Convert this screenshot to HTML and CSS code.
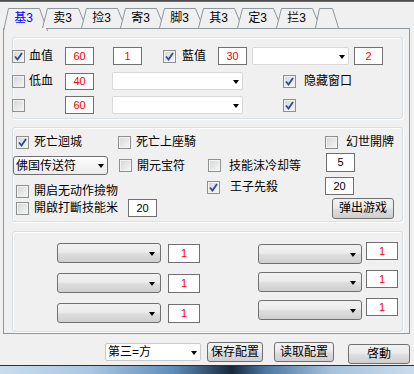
FILE: index.html
```html
<!DOCTYPE html>
<html lang="zh">
<head>
    <meta charset="UTF-8">
    <title>基3</title>
    <link rel="stylesheet" href="styles.css">
</head>
<body>
    <div class="titleline"></div>

    <div class="tabs">
        <div class="tab active">
            <svg class="tab-shape" width="46" height="23"><polyline points="0.5,23 5.5,0.5 36.5,0.5 44.5,23"/></svg>
            <span class="tab-label">基3</span>
        </div>
        <div class="tab">
            <svg class="tab-shape" width="46" height="20"><polyline points="0.5,20 5.5,0.5 36.5,0.5 44.5,20"/></svg>
            <span class="tab-label">卖3</span>
        </div>
        <div class="tab">
            <svg class="tab-shape" width="46" height="20"><polyline points="0.5,20 5.5,0.5 36.5,0.5 44.5,20"/></svg>
            <span class="tab-label">捡3</span>
        </div>
        <div class="tab">
            <svg class="tab-shape" width="46" height="20"><polyline points="0.5,20 5.5,0.5 36.5,0.5 44.5,20"/></svg>
            <span class="tab-label">寄3</span>
        </div>
        <div class="tab">
            <svg class="tab-shape" width="46" height="20"><polyline points="0.5,20 5.5,0.5 36.5,0.5 44.5,20"/></svg>
            <span class="tab-label">脚3</span>
        </div>
        <div class="tab">
            <svg class="tab-shape" width="46" height="20"><polyline points="0.5,20 5.5,0.5 36.5,0.5 44.5,20"/></svg>
            <span class="tab-label">其3</span>
        </div>
        <div class="tab">
            <svg class="tab-shape" width="46" height="20"><polyline points="0.5,20 5.5,0.5 36.5,0.5 44.5,20"/></svg>
            <span class="tab-label">定3</span>
        </div>
        <div class="tab">
            <svg class="tab-shape" width="46" height="20"><polyline points="0.5,20 5.5,0.5 36.5,0.5 44.5,20"/></svg>
            <span class="tab-label">拦3</span>
        </div>
        <div class="tab tab-empty">
            <svg class="tab-shape" width="25" height="20"><polyline points="0.5,20 4.5,0.5 17.5,0.5 23.5,20"/></svg>
        </div>
    </div>

    <div class="panel">
        <!-- hp / mp -->
        <div class="group g1">
            <div class="row h24">
                <label class="chk w53 gap4"><span class="cb on"><svg width="11" height="11"><path d="M2 5.5 L4.5 8.5 L9 2"/></svg></span><span>血值</span></label>
                <div class="num red">60</div>
                <div class="num red ml19">1</div>
                <label class="chk w55 gap6 ml21"><span class="cb on"><svg width="11" height="11"><path d="M2 5.5 L4.5 8.5 L9 2"/></svg></span><span>藍值</span></label>
                <div class="num red">30</div>
                <div class="combo w97 ml5"><span class="arrow"></span></div>
                <div class="num red ml5">2</div>
            </div>
            <div class="row h26">
                <label class="chk w53 gap4"><span class="cb"></span><span>低血</span></label>
                <div class="num red h17">40</div>
                <div class="combo w131 h20 ml18"><span class="arrow"></span></div>
                <label class="chk gap8 ml40"><span class="cb on"><svg width="11" height="11"><path d="M2 5.5 L4.5 8.5 L9 2"/></svg></span><span>隐藏窗口</span></label>
            </div>
            <div class="row h22">
                <label class="chk w53"><span class="cb"></span></label>
                <div class="num red">60</div>
                <div class="combo w131 h20 ml18"><span class="arrow"></span></div>
                <label class="chk ml40"><span class="cb on"><svg width="11" height="11"><path d="M2 5.5 L4.5 8.5 L9 2"/></svg></span></label>
            </div>
        </div>

        <!-- options -->
        <div class="group g2">
            <div class="row h24 pl3">
                <label class="chk w102"><span class="cb on"><svg width="11" height="11"><path d="M2 5.5 L4.5 8.5 L9 2"/></svg></span><span>死亡迴城</span></label>
                <label class="chk w207"><span class="cb"></span><span>死亡上座騎</span></label>
                <label class="chk gap8"><span class="cb"></span><span>幻世開牌</span></label>
            </div>
            <div class="row h23">
                <div class="dd dd-light w95"><span class="dd-text">佛国传送符</span><span class="arrow"></span></div>
                <label class="chk w89 ml11"><span class="cb"></span><span>開元宝符</span></label>
                <label class="chk w118 gap8"><span class="cb"></span><span>技能沫冷却等</span></label>
                <div class="num h19 up">5</div>
            </div>
            <div class="row h20 pl3">
                <label class="chk w191 down"><span class="cb"></span><span>開启无动作撿物</span></label>
                <label class="chk w118 gap10"><span class="cb on"><svg width="11" height="11"><path d="M2 5.5 L4.5 8.5 L9 2"/></svg></span><span>王子先殺</span></label>
                <div class="num up-small">20</div>
            </div>
            <div class="row h22 pl3">
                <label class="chk w112"><span class="cb"></span><span>開啟打斷技能米</span></label>
                <div class="num">20</div>
                <div class="btn w62 h21 ml175">弹出游戏</div>
            </div>
        </div>

        <!-- skill slots -->
        <div class="group g3">
            <div class="slots slots-left">
                <div class="slot"><div class="dd w104"><span class="arrow"></span></div><div class="num red w32 h19">1</div></div>
                <div class="slot"><div class="dd w104"><span class="arrow"></span></div><div class="num red w32 h19">1</div></div>
                <div class="slot"><div class="dd w104"><span class="arrow"></span></div><div class="num red w32 h19">1</div></div>
            </div>
            <div class="slots slots-right">
                <div class="slot"><div class="dd w104"><span class="arrow"></span></div><div class="num red w32 h20">1</div></div>
                <div class="slot"><div class="dd w104"><span class="arrow"></span></div><div class="num red w32 h20">1</div></div>
                <div class="slot"><div class="dd w104"><span class="arrow"></span></div><div class="num red w32 h20">1</div></div>
            </div>
        </div>
    </div>

    <div class="footer">
        <div class="combo combo-text w96 h20 mt1"><span class="dd-text">第三=方</span><span class="arrow"></span></div>
        <div class="btn w56 ml6">保存配置</div>
        <div class="btn w60 ml11">读取配置</div>
        <div class="btn w62 ml14 mt2">啓動</div>
    </div>

    <div class="taskbar"></div>
</body>
</html>
```

FILE: styles.css
```css
* {
    box-sizing: border-box;
}

body {
    margin: 0;
    width: 414px;
    height: 374px;
    overflow: hidden;
    background: #f0f0f0;
    font-family: "Liberation Sans", "Noto Sans CJK SC", sans-serif;
    font-size: 12px;
    line-height: 14px;
    color: #000;
}

.titleline {
    height: 2px;
    background: linear-gradient(#3c3c3c, #7c7c7c);
}

/* tabs */
.tabs {
    display: flex;
    height: 26px;
    padding-left: 3px;
}

.tab {
    position: relative;
    flex: none;
    width: 39px;
    height: 26px;
}

.tab-shape {
    position: absolute;
    left: 0;
    bottom: 0;
    overflow: visible;
}

.tab-shape polyline {
    fill: #f0f0f0;
    stroke: #8c979e;
    stroke-width: 1;
}

.tab.active .tab-shape {
    bottom: -3px;
}

.tab-label {
    position: relative;
    display: block;
    width: 31px;
    margin-left: 5px;
    padding-top: 9px;
    text-align: center;
}

.tab.active .tab-label {
    color: #0000ff;
}

/* panel */
.panel {
    margin-left: 3px;
    width: 407px;
    height: 306px;
    border: 1px solid #8c979e;
    padding: 8px 6px 1px 8px;
}

.group {
    border: 1px solid #d5dfe5;
    border-radius: 3px;
    box-shadow: inset 1px 1px 0 #fff, 1px 1px 0 #fff;
}

.g1 {
    height: 82px;
    padding-top: 6px;
}

.g1 .row {
    margin-left: -1px;
}

.g2 {
    height: 95px;
    margin-top: 8px;
    padding-top: 2px;
}

.g3 {
    display: flex;
    height: 101px;
    margin-top: 9px;
    padding-top: 11px;
}

.row {
    display: flex;
    align-items: center;
}

.h20 { height: 20px; }
.h22 { height: 22px; }
.h23 { height: 23px; }
.h24 { height: 24px; }
.h26 { height: 26px; }
.pl3 { padding-left: 3px; }

/* checkbox */
.chk {
    display: flex;
    flex: none;
    align-items: center;
    gap: 5px;
    white-space: nowrap;
}

.gap4 { gap: 4px; }
.gap6 { gap: 6px; }
.gap8 { gap: 8px; }
.gap10 { gap: 10px; }

.cb {
    display: block;
    flex: none;
    width: 13px;
    height: 13px;
    border: 1px solid #8e8f8f;
    background: linear-gradient(135deg, #d3d5d8, #f7f7f7);
    box-shadow: inset 0 0 0 1px #f2f2f2;
}

.cb svg {
    display: block;
}

.cb path {
    fill: none;
    stroke: #2e4b8f;
    stroke-width: 1.8;
}

.down {
    margin-top: 8px;
}

/* edits */
.num {
    display: flex;
    flex: none;
    align-items: center;
    justify-content: center;
    width: 29px;
    height: 18px;
    border: 1px solid #707070;
    background: #fff;
    font-size: 11px;
}

.red { color: #ff0000; }
.w32 { width: 32px; }
.h17 { height: 17px; }
.h19 { height: 19px; }
.up { margin-bottom: 7px; }
.up-small { margin-bottom: 3px; }

/* combos */
.combo {
    display: flex;
    flex: none;
    align-items: center;
    justify-content: flex-end;
    height: 18px;
    padding-right: 3px;
    border: 1px solid #d9d9d9;
    border-radius: 2px;
    background: #fff;
}

.combo-text {
    justify-content: space-between;
    padding-left: 2px;
    border-color: #c9c9c9;
}

.dd {
    display: flex;
    flex: none;
    align-items: center;
    justify-content: flex-end;
    height: 20px;
    padding-right: 5px;
    border: 1px solid #707070;
    border-radius: 3px;
    background: linear-gradient(#f2f2f2, #ebebeb 45%, #dddddd 55%, #cfcfcf);
}

.dd-light {
    justify-content: space-between;
    height: 19px;
    padding: 0 3px 0 2px;
    background: linear-gradient(#fdfdfd, #f4f4f4 50%, #ececec);
}

.dd-text {
    white-space: nowrap;
}

.arrow {
    display: block;
    width: 1px;
    height: 0;
    margin-top: 1px;
    border-left: 3px solid transparent;
    border-right: 3px solid transparent;
    border-top: 4px solid #000;
}

.slots {
    display: flex;
    flex-direction: column;
}

.slots-left {
    margin-left: 44px;
    gap: 10px;
}

.slots-left .slot {
    display: flex;
    align-items: center;
    gap: 7px;
    height: 20px;
}

.slots-right {
    margin-left: 58px;
    margin-top: -1px;
    gap: 6px;
}

.slots-right .slot {
    display: flex;
    align-items: flex-start;
    gap: 4px;
    height: 22px;
}

.slots-right .dd {
    margin-top: 2px;
}

/* buttons */
.btn {
    display: flex;
    flex: none;
    align-items: center;
    justify-content: center;
    height: 20px;
    border: 1px solid #707070;
    border-radius: 3px;
    background: linear-gradient(#f2f2f2, #ebebeb 45%, #dddddd 55%, #cfcfcf);
    white-space: nowrap;
}

.h21 { height: 21px; }

/* widths / margins */
.w53 { width: 53px; }
.w55 { width: 55px; }
.w56 { width: 56px; }
.w60 { width: 60px; }
.w62 { width: 62px; }
.w89 { width: 89px; }
.w95 { width: 95px; }
.w96 { width: 96px; }
.w97 { width: 97px; }
.w102 { width: 102px; }
.w104 { width: 104px; }
.w112 { width: 112px; }
.w118 { width: 118px; }
.w131 { width: 131px; }
.w191 { width: 191px; }
.w207 { width: 207px; }

.ml5 { margin-left: 5px; }
.ml6 { margin-left: 6px; }
.ml11 { margin-left: 11px; }
.ml14 { margin-left: 14px; }
.ml18 { margin-left: 18px; }
.ml19 { margin-left: 19px; }
.ml21 { margin-left: 21px; }
.ml40 { margin-left: 40px; }
.ml175 { margin-left: 175px; }
.mt1 { margin-top: 1px; }
.mt2 { margin-top: 2px; }

/* bottom */
.footer {
    display: flex;
    align-items: flex-start;
    height: 31px;
    padding: 8px 0 0 105px;
}

.taskbar {
    height: 9px;
    border-top: 1px solid #2f2f2f;
    background: linear-gradient(90deg, #c9dced 0%, #a9c6e2 22%, #5f8cb8 42%, #17293d 56%, #4c76a0 64%, #a5c2dd 80%, #cadcec 100%);
}
```
